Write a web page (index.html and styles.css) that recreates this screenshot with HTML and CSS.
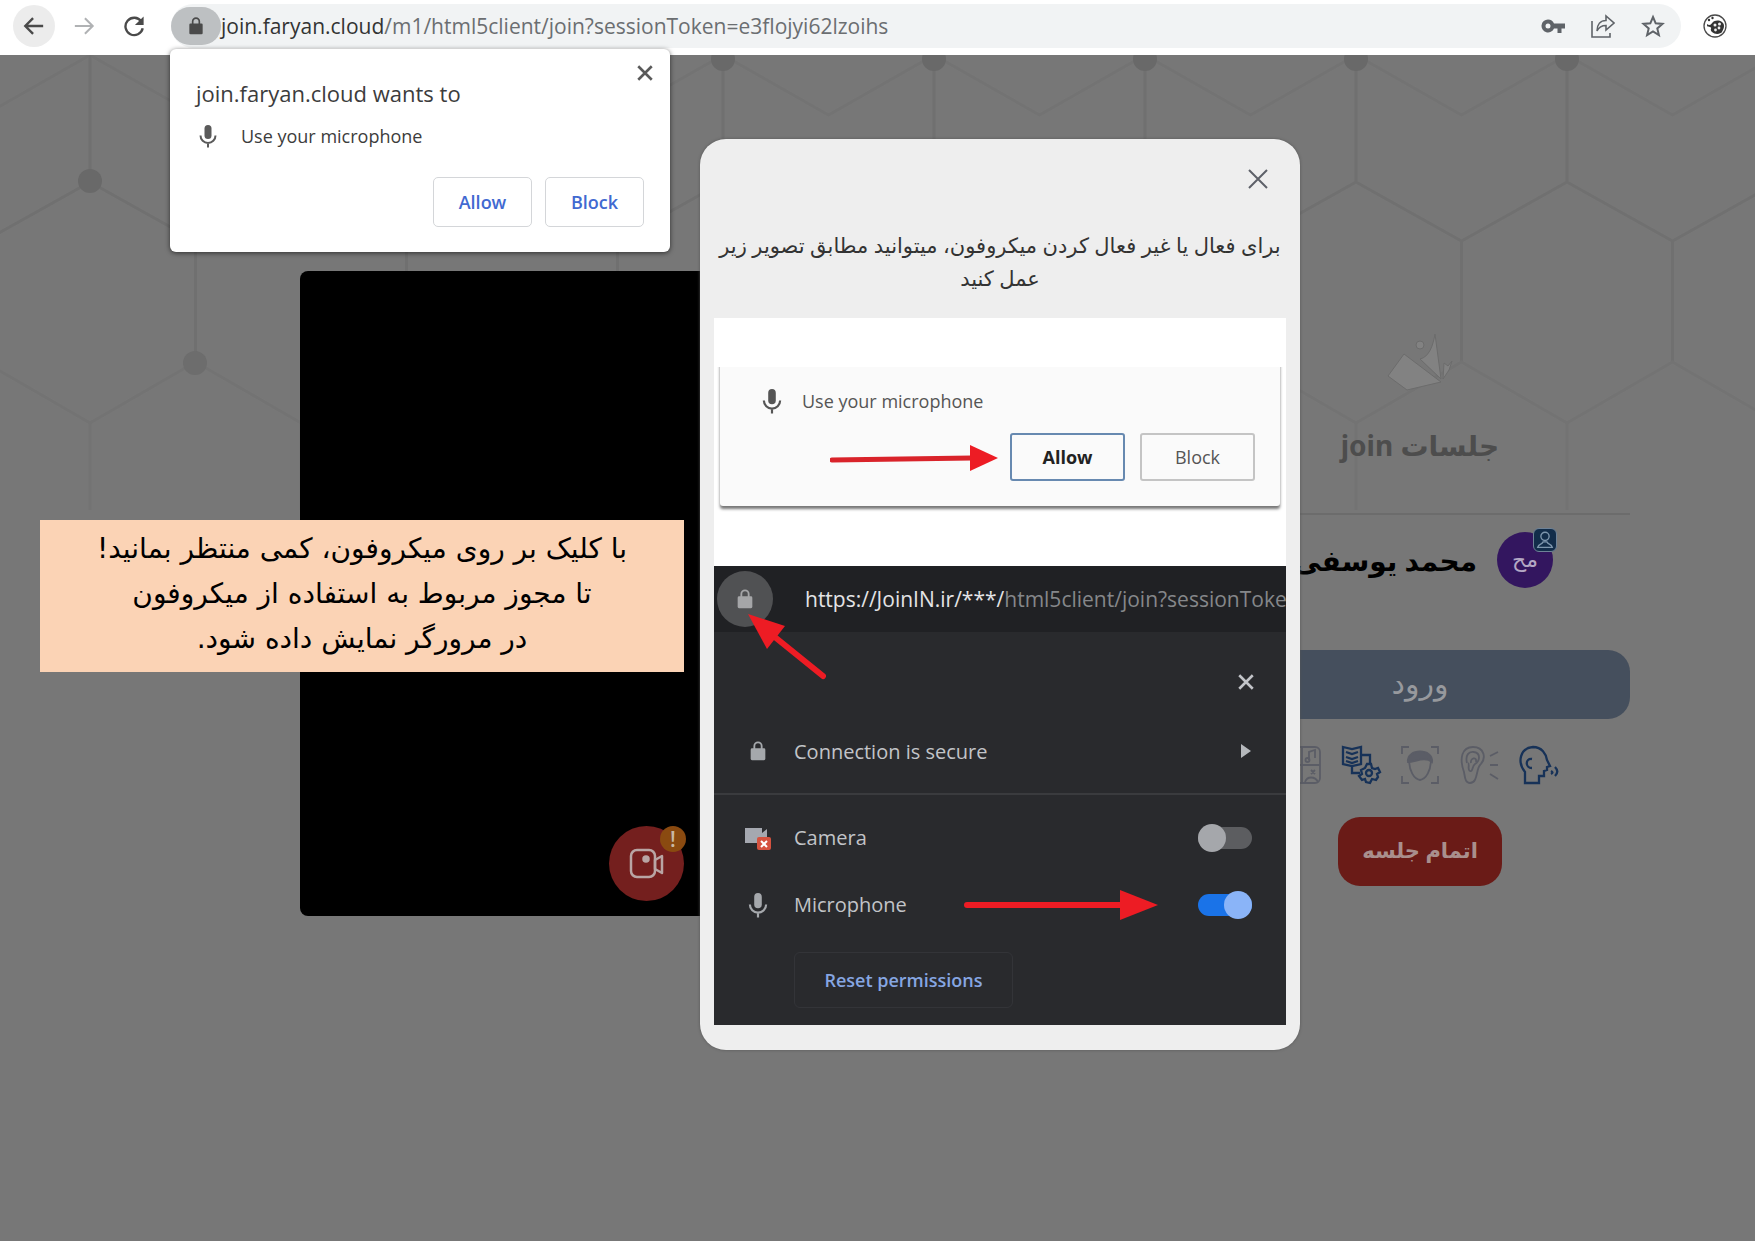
FILE: index.html
```
<!DOCTYPE html>
<html lang="fa">
<head>
    <meta charset="UTF-8">
    <meta name="viewport" content="width=device-width, initial-scale=1.0">
    <title>جلسات join</title>
    <link rel="stylesheet" href="styles.css">
</head>
<body>
    <!-- shared icons -->
    <svg class="sprite" aria-hidden="true">
        <symbol id="mic" viewBox="0 0 24 24">
            <rect x="8.5" y="1" width="7" height="14" rx="3.5" fill="currentColor"/>
            <path d="M4.5 11.5a7.5 7.5 0 0 0 15 0M12 19v4.5" fill="none" stroke="currentColor" stroke-width="2"/>
        </symbol>
        <symbol id="lock" viewBox="0 0 24 24">
            <rect x="4" y="9" width="16" height="13" rx="1.5" fill="currentColor"/>
            <path d="M8 10V6.500a4 4 0 0 1 8 0V10" fill="none" stroke="currentColor" stroke-width="2"/>
        </symbol>
        <symbol id="cross" viewBox="0 0 24 24">
            <path d="M3 3l18 18M21 3L3 21" fill="none" stroke="currentColor" stroke-width="3.500"/>
        </symbol>
    </svg>

    <header class="browser-bar">
        <button class="nav-btn nav-back" aria-label="Back">
            <svg viewBox="0 0 24 24"><path d="M22 12H3M11 3.500L2.500 12l8.500 8.500" fill="none" stroke="#4a4a4a" stroke-width="2.600"/></svg>
        </button>
        <button class="nav-btn" aria-label="Forward">
            <svg viewBox="0 0 24 24"><path d="M2 12h19M13 3.500l8.500 8.500-8.500 8.500" fill="none" stroke="#b0b2b4" stroke-width="2.200"/></svg>
        </button>
        <button class="nav-btn" aria-label="Reload">
            <svg viewBox="0 0 24 24"><path d="M20 7a9.500 9.500 0 1 0 1.500 7.500" fill="none" stroke="#4a4a4a" stroke-width="2.600"/><path d="M22.500 1.500V11H13z" fill="#4a4a4a"/></svg>
        </button>
        <div class="address-bar">
            <button class="site-info" aria-label="View site information">
                <svg><use href="#lock"/></svg>
            </button>
            <span class="url">join.faryan.cloud<span class="url-path">/m1/html5client/join?sessionToken=e3flojyi62lzoihs</span></span>
            <div class="address-actions">
                <button class="icon-btn" aria-label="Passwords">
                    <svg viewBox="0 0 24 24"><path d="M7 5.500a6.500 6.500 0 1 0 6 9h3.500V19h4v-4.500H24v-5H13a6.500 6.500 0 0 0-6-4zM7 9.500a2.500 2.500 0 1 1 0 5 2.500 2.500 0 0 1 0-5z" fill="#5f6368" fill-rule="evenodd"/></svg>
                </button>
                <button class="icon-btn" aria-label="Share">
                    <svg viewBox="0 0 24 24"><path d="M1 7v16h18v-4M6 17c0-6.500 3.500-10.500 9-10.500V2l8 7-8 7v-4.500c-4.500 0-7 1.500-9 5.500z" fill="none" stroke="#5f6368" stroke-width="1.600"/></svg>
                </button>
                <button class="icon-btn" aria-label="Bookmark">
                    <svg viewBox="0 0 24 24"><path d="M12 3l2.700 6.300 6.800.6-5.200 4.500 1.600 6.700L12 17.500l-5.900 3.600 1.600-6.700-5.200-4.500 6.800-.6z" fill="none" stroke="#5f6368" stroke-width="2"/></svg>
                </button>
            </div>
        </div>
        <button class="icon-btn extension" aria-label="Extension">
            <svg viewBox="0 0 24 24">
                <circle cx="12" cy="12" r="11" fill="#fff" stroke="#4a4a4a" stroke-width="1.300"/>
                <path d="M4 10c3 3 5-1 6-2s5-3 9 0 1 8 0 10-7 3-10 0 1-4-2-5-3 0-3-3z" fill="#333"/>
                <g fill="#eee"><circle cx="12" cy="11" r="1.500"/><circle cx="16.500" cy="10" r="1.500"/><circle cx="16" cy="14" r="1.400"/><circle cx="12.500" cy="16" r="1.400"/></g>
                <g fill="#333"><circle cx="6" cy="6" r="1.200"/><circle cx="9.500" cy="4" r="1.200"/></g>
            </svg>
        </button>
    </header>

    <main class="page">
        <svg class="page-bg" aria-hidden="true">
            <defs>
                <pattern id="hex" x="90" width="211" height="480" patternUnits="userSpaceOnUse">
                    <path d="M0 0L105.500 60L211 0" stroke="#737373"/>
                    <path d="M0 0V127M211 0V127L105.500 186L0 127M105.500 186V307" stroke="#707070"/>
                    <path d="M0 368L105.500 307L211 368M0 368V455M211 368V455" stroke="#737373"/>
                </pattern>
            </defs>
            <rect width="100%" height="480" fill="url(#hex)"/>
            <g fill="#696969">
                <circle cx="90" cy="126" r="12"/><circle cx="195" cy="308" r="12" fill="#6d6d6d"/>
                <circle cx="723" cy="4" r="12"/><circle cx="934" cy="4" r="12"/><circle cx="1145" cy="4" r="12"/>
                <circle cx="1356" cy="4" r="12"/><circle cx="1567" cy="4" r="12"/>
            </g>
        </svg>

        <section class="video-preview">
            <button class="camera-btn" aria-label="Camera">
                <svg viewBox="0 0 36 36" fill="none" stroke="#b9a5a4" stroke-width="2.500">
                    <rect x="2" y="4" width="24" height="27" rx="6"/>
                    <path d="M26 14l7-4v17l-7-4z" stroke-linejoin="round"/>
                    <circle cx="17" cy="13" r="2.500" fill="#b9a5a4"/>
                </svg>
                <span class="camera-alert">!</span>
            </button>
        </section>

        <aside class="session" dir="rtl">
            <svg class="session-logo" viewBox="0 0 66 58" fill="#828282" stroke="#6c6c6c">
                <path d="M17 21L54 49L20 57L1 43z"/>
                <path d="M33 26c9-2 13-13 15-25l6 45z"/>
                <circle cx="33" cy="12" r="4"/>
                <path d="M56 46l1-16 4 3 4-5-3 9z"/>
            </svg>
            <h1 class="session-title">جلسات join</h1>
            <div class="user">
                <div class="avatar">مح
                    <span class="avatar-badge">
                        <svg viewBox="0 0 24 24" fill="none" stroke="#7d96ad" stroke-width="1.500"><circle cx="12" cy="8" r="4.500"/><path d="M4 20c1-4 5-3 6-6h4c1 3 5 2 6 6z"/></svg>
                    </span>
                </div>
                <span class="user-name">محمد یوسفی</span>
            </div>
            <button class="enter-btn">ورود</button>
            <div class="abilities">
                <svg viewBox="0 0 38 38" stroke="#173258" stroke-width="2.300">
                    <path d="M6 37V26C-2 16 1 2 14 1c9 0 13 7 14 13l3 6-3 1v3l-3 1v5h-5v7zM13 13c-7-1-7 9 0 9M32 25c2 1 2 2 0 3M36 21c3 3 3 6 0 9"/>
                </svg>
                <svg viewBox="0 0 38 38" stroke="#5b5d66" stroke-width="1.800">
                    <path d="M4 26C-1 12 2 1 13 1c11 0 14 11 7 18-4 4-2 18-10 18-5 0-5-6-6-11zM7 17C5 9 9 5 14 6c7 1 6 9 1 12-3 2-2 8-5 7s0-7-2-8M11 17c-1-5 6-7 5-1M30 10l8-4M30 19h8M30 28l8 5"/>
                </svg>
                <svg viewBox="0 0 38 38" stroke="#5b5d66" stroke-width="1.800">
                    <path d="M1 8V1h7M30 1h7v7M37 30v7h-7M8 37H1v-7M8 13c0 12 5 20 11 21 6-1 11-9 11-21"/>
                    <path d="M7 16c-2-14 26-14 24 0-7-6-17 0-24 0z" fill="#5b5d66"/>
                </svg>
                <svg viewBox="0 0 38 38" stroke="#173258" stroke-width="2.300">
                    <path d="M1 1l9 2 9-2v17l-9 2-9-2zM4 6l6 2 6-2M4 11l6 2 6-2M4 15l6 2 6-2M20 9h8v8M10 20v7h8"/>
                    <path d="M25 18h4l1 4 3 1 3-1 2 4-3 2 1 3-2 3-4-1-2 4-4-1-1-3-3 1-3-4 3-2-1-4 4-2z"/>
                    <circle cx="27" cy="27" r="3"/>
                </svg>
                <svg viewBox="0 0 38 38" stroke="#5b5d66" stroke-width="1.800">
                    <rect x="1" y="1" width="36" height="36" rx="5"/>
                    <path d="M19 1v36M1 19h36M26 14V6l6-2v8M22 36c2-6 10-6 13 0M28 24l4 4M32 24l-4 4"/>
                    <circle cx="24.500" cy="14" r="2"/><circle cx="10" cy="10" r="4"/>
                </svg>
            </div>
            <button class="end-btn">اتمام جلسه</button>
        </aside>
    </main>

    <div class="permission-popup" role="dialog" aria-labelledby="permissionTitle">
        <button class="popup-close" aria-label="Close"><svg><use href="#cross"/></svg></button>
        <h2 id="permissionTitle">join.faryan.cloud wants to</h2>
        <p class="permission-item"><svg><use href="#mic"/></svg>Use your microphone</p>
        <div class="popup-actions">
            <button class="popup-btn">Allow</button>
            <button class="popup-btn">Block</button>
        </div>
    </div>

    <div class="hint-note" dir="rtl">
        با کلیک بر روی میکروفون، کمی منتظر بمانید!<br>
        تا مجوز مربوط به استفاده از میکروفون<br>
        در مرورگر نمایش داده شود.
    </div>

    <div class="modal" role="dialog" aria-labelledby="modalText">
        <button class="modal-close" aria-label="بستن">
            <svg viewBox="0 0 24 24"><path d="M3 3l18 18M21 3L3 21" fill="none" stroke="#5d6068" stroke-width="2"/></svg>
        </button>
        <p id="modalText" class="modal-text" dir="rtl">برای فعال یا غیر فعال کردن میکروفون، میتوانید مطابق تصویر زیر عمل کنید</p>

        <div class="guide">
            <div class="guide-light">
                <div class="guide-card">
                    <p class="guide-mic"><svg><use href="#mic"/></svg>Use your microphone</p>
                    <div class="guide-actions">
                        <svg class="arrow-allow" viewBox="0 0 168 28"><path d="M2 17L142 15" stroke="#d9232a" stroke-width="5" stroke-linecap="round"/><path d="M140 2l28 13-28 13z" fill="#ed1c24"/></svg>
                        <button class="guide-btn guide-btn-allow">Allow</button>
                        <button class="guide-btn">Block</button>
                    </div>
                </div>
            </div>
            <div class="guide-dark">
                <div class="guide-url">
                    <span class="guide-lock"><svg><use href="#lock"/></svg></span>
                    <span class="guide-url-text">https://JoinIN.ir/***/<span class="guide-url-path">html5client/join?sessionToken</span></span>
                </div>
                <svg class="arrow-lock" viewBox="0 0 78 66"><path d="M28 24L75 62" stroke="#ed1c24" stroke-width="6" stroke-linecap="round"/><path d="M0 0L37 12L19 35z" fill="#ed1c24"/></svg>
                <div class="guide-panel">
                    <button class="guide-close" aria-label="Close"><svg><use href="#cross"/></svg></button>
                    <div class="guide-row guide-secure">
                        <svg class="row-lock"><use href="#lock"/></svg>
                        <span>Connection is secure</span>
                        <svg class="chevron" viewBox="0 0 12 14"><path d="M1 0l10 7-10 7z" fill="#b5b8bc"/></svg>
                    </div>
                    <div class="guide-row">
                        <svg viewBox="0 0 26 24"><path d="M0 2h17v5l5-4v14H0z" fill="#a5a8b0"/><rect x="12" y="11" width="14" height="13" rx="2" fill="#d5523f"/><path d="M16 15l6 6M22 15l-6 6" stroke="#fff" stroke-width="2"/></svg>
                        <label for="camera">Camera</label>
                        <input class="toggle" type="checkbox" id="camera">
                    </div>
                    <div class="guide-row">
                        <svg><use href="#mic"/></svg>
                        <label for="microphone">Microphone</label>
                        <svg class="arrow-mic" viewBox="0 0 194 30"><path d="M3 15h156" stroke="#ed1c24" stroke-width="6" stroke-linecap="round"/><path d="M156 0l38 15-38 15z" fill="#ed1c24"/></svg>
                        <input class="toggle" type="checkbox" id="microphone" checked>
                    </div>
                    <button class="reset-btn">Reset permissions</button>
                </div>
            </div>
        </div>
    </div>
</body>
</html>
```
FILE: styles.css
```
/* base */
* {
    box-sizing: border-box;
}

body {
    margin: 0;
    min-height: 100vh;
    display: flex;
    flex-direction: column;
    position: relative;
    overflow: hidden;
    font-family: "Open Sans", "Noto Sans", "DejaVu Sans", sans-serif;
    background: #777;
}

button {
    display: flex;
    align-items: center;
    justify-content: center;
    padding: 0;
    border: none;
    background: none;
    font-family: inherit;
    cursor: pointer;
}

h1, h2, p {
    margin: 0;
}

.sprite {
    display: none;
}

/* browser toolbar */
.browser-bar {
    display: flex;
    align-items: center;
    gap: 8px;
    height: 55px;
    padding: 0 28px 4px 13px;
    background: #fff;
    direction: ltr;
}

.nav-btn {
    width: 42px;
    height: 42px;
    border-radius: 50%;
}

.nav-btn svg {
    width: 22px;
    height: 22px;
}

.nav-back {
    background: #ececec;
}

.address-bar {
    flex: 1;
    display: flex;
    align-items: center;
    height: 44px;
    margin: 0 14px 0 8px;
    border-radius: 22px;
    background: #f1f3f4;
}

.site-info {
    width: 50px;
    height: 38px;
    border-radius: 20px;
    background: #bdc0c2;
    color: #4a4a4a;
}

.site-info svg {
    width: 20px;
    height: 20px;
}

.url {
    font-size: 21px;
    color: #333;
}

.url-path {
    color: #6b6e71;
}

.address-actions {
    display: flex;
    gap: 26px;
    margin-left: auto;
    padding-right: 16px;
}

.icon-btn {
    width: 24px;
    height: 24px;
}

.icon-btn svg {
    width: 24px;
    height: 24px;
}

/* meeting page behind the dialogs */
.page {
    flex: 1;
    position: relative;
    display: grid;
    grid-template-columns: 1fr 420px;
    gap: 110px;
    align-items: start;
    padding: 216px 125px 0 300px;
}

.page-bg {
    position: absolute;
    top: 0;
    left: 0;
    width: 100%;
    height: 100%;
}

.page-bg path {
    fill: none;
    stroke-width: 3;
}

.video-preview {
    position: relative;
    display: flex;
    align-items: flex-end;
    height: 645px;
    padding: 0 0 15px 309px;
    border-radius: 8px;
    background: #000;
}

.camera-btn {
    position: relative;
    width: 75px;
    height: 75px;
    border-radius: 50%;
    background: #741f1e;
}

.camera-btn svg {
    width: 36px;
    height: 36px;
}

.camera-alert {
    position: absolute;
    top: 0;
    right: -2px;
    width: 26px;
    height: 26px;
    border-radius: 50%;
    background: #8a4a10;
    color: #c9b9a5;
    font-size: 21px;
    font-weight: 600;
    line-height: 26px;
}

.session {
    position: relative;
    display: flex;
    flex-direction: column;
    align-items: center;
    padding-top: 62px;
    font-family: "Noto Sans", "DejaVu Sans", sans-serif;
}

.session-logo {
    width: 66px;
    height: 58px;
}

.session-title {
    width: 100%;
    padding: 30px 0 44px;
    border-bottom: 2px solid #6c6c6c;
    font-size: 28px;
    line-height: 48px;
    text-align: center;
    color: #4d4d4d;
}

.user {
    align-self: stretch;
    display: flex;
    align-items: center;
    gap: 20px;
    padding: 17px 77px 62px 0;
}

.avatar {
    position: relative;
    flex-shrink: 0;
    width: 56px;
    height: 56px;
    border-radius: 50%;
    background: #33165f;
    color: #b3a8c4;
    font-size: 22px;
    line-height: 52px;
    text-align: center;
}

.avatar-badge {
    position: absolute;
    top: -4px;
    right: -4px;
    display: flex;
    width: 24px;
    height: 24px;
    border: 1px solid #6e8297;
    border-radius: 6px;
    background: #122d4a;
}

.user-name {
    font-size: 28px;
    font-weight: bold;
    line-height: 56px;
    white-space: nowrap;
    color: #000;
}

.enter-btn {
    width: 100%;
    height: 69px;
    padding-bottom: 4px;
    border-radius: 22px;
    background: #454f5d;
    color: #97999d;
    font-size: 30px;
}

.abilities {
    display: flex;
    gap: 21px;
    padding: 27px 0 33px;
}

.abilities svg {
    width: 38px;
    height: 38px;
    fill: none;
    overflow: visible;
}

.end-btn {
    height: 69px;
    padding: 0 24px 4px;
    border-radius: 22px;
    background: #6a1b17;
    color: #a98f8d;
    font-size: 21px;
    font-weight: bold;
}

/* browser permission prompt */
.permission-popup {
    position: absolute;
    top: 49px;
    left: 170px;
    width: 500px;
    padding: 28px 26px 25px;
    border-radius: 6px;
    background: #fff;
    box-shadow: 0 1px 5px rgba(0, 0, 0, 0.6);
}

.popup-close {
    position: absolute;
    top: 14px;
    right: 15px;
    width: 20px;
    height: 20px;
    color: #5a5a5a;
}

.popup-close svg {
    width: 18px;
    height: 18px;
}

.permission-popup h2 {
    font-size: 22px;
    font-weight: normal;
    line-height: 32px;
    color: #3c3c3c;
}

.permission-item {
    display: flex;
    align-items: center;
    gap: 21px;
    padding: 14px 0 28px;
    font-size: 18px;
    line-height: 26px;
    color: #3c3c3c;
}

.permission-item svg {
    width: 24px;
    height: 24px;
    color: #5a5a5a;
}

.popup-actions {
    display: flex;
    justify-content: flex-end;
    gap: 13px;
}

.popup-btn {
    width: 99px;
    height: 50px;
    border: 1px solid #d4d6d9;
    border-radius: 5px;
    color: #4169d1;
    font-size: 18px;
    font-weight: 600;
}

/* annotation */
.hint-note {
    position: absolute;
    top: 520px;
    left: 40px;
    width: 644px;
    padding: 6px 0 11px;
    background: #fbd3b5;
    color: #000;
    font-family: "DejaVu Sans", serif;
    font-size: 28px;
    line-height: 45px;
    text-align: center;
}

/* help dialog */
.modal {
    position: absolute;
    top: 139px;
    left: 700px;
    width: 600px;
    padding: 26px 14px 25px;
    border-radius: 26px;
    background: #eee;
    box-shadow: 0 0 3px #555;
}

.modal-close {
    width: 28px;
    height: 28px;
    margin: 0 14px 0 auto;
}

.modal-close svg {
    width: 24px;
    height: 24px;
}

.modal-text {
    margin: 0 -8px;
    padding: 36px 0 23px;
    font-family: "Noto Sans", "DejaVu Sans", sans-serif;
    font-size: 21px;
    line-height: 33px;
    text-align: center;
    color: #333;
}

.guide-light {
    padding: 21px 6px 60px;
    background: #fff;
}

.guide-card {
    padding: 48px 25px 25px 39px;
    background: #fafafa;
    border-radius: 3px;
    box-shadow: 0 3px 3px #777;
    clip-path: inset(28px -6px -8px -6px);
}

.guide-mic {
    display: flex;
    align-items: center;
    gap: 17px;
    padding-bottom: 18px;
    font-size: 18px;
    line-height: 28px;
    color: #555;
}

.guide-mic svg {
    width: 26px;
    height: 26px;
}

.guide-actions {
    display: flex;
    align-items: center;
    justify-content: flex-end;
    gap: 15px;
}

.arrow-allow {
    width: 168px;
    height: 28px;
    margin-right: -3px;
}

.guide-btn {
    width: 115px;
    height: 48px;
    border: 2px solid #c4c4c4;
    border-radius: 3px;
    color: #555;
    font-size: 18px;
}

.guide-btn-allow {
    border-color: #6789b0;
    color: #222;
    font-weight: bold;
}

.guide-dark {
    position: relative;
    background: #292a2d;
    color: #c2c4c8;
}

.guide-url {
    display: flex;
    align-items: center;
    gap: 32px;
    height: 66px;
    padding-left: 3px;
    overflow: hidden;
    background: #202124;
    white-space: nowrap;
}

.guide-lock {
    flex-shrink: 0;
    display: flex;
    align-items: center;
    justify-content: center;
    width: 56px;
    height: 56px;
    border-radius: 50%;
    background: #505153;
    color: #a5a6a8;
}

.guide-lock svg {
    width: 22px;
    height: 22px;
}

.guide-url-text {
    font-size: 21px;
    color: #e4e4e6;
}

.guide-url-path {
    color: #85878a;
}

.arrow-lock {
    position: absolute;
    top: 48px;
    left: 34px;
    width: 78px;
    height: 66px;
}

.guide-panel {
    padding: 35px 0 17px;
}

.guide-close {
    width: 30px;
    height: 30px;
    margin: 0 25px 0 auto;
    color: #c2c4c8;
}

.guide-close svg {
    width: 18px;
    height: 18px;
}

.guide-row {
    display: flex;
    align-items: center;
    gap: 23px;
    height: 67px;
    padding: 0 34px 0 31px;
    font-size: 20px;
}

.guide-row > svg:first-child {
    width: 26px;
    height: 26px;
    color: #a5a8ac;
}

.guide-row > .row-lock:first-child {
    height: 22px;
}

.guide-row > :last-child {
    margin-left: auto;
}

.guide-secure {
    height: 98px;
    padding-top: 12px;
    margin-bottom: 9px;
    border-bottom: 2px solid #3a3b3e;
}

.chevron {
    width: 12px;
    height: 14px;
}

.arrow-mic {
    width: 194px;
    height: 30px;
    margin-left: 34px;
}

.toggle {
    appearance: none;
    position: relative;
    width: 54px;
    height: 22px;
    margin: 0;
    border-radius: 11px;
    background: #5c5d60;
}

.toggle::before {
    content: "";
    position: absolute;
    top: -3px;
    left: 0;
    width: 28px;
    height: 28px;
    border-radius: 50%;
    background: #a5a7ab;
}

.toggle:checked {
    background: #1a73e8;
}

.toggle:checked::before {
    left: 26px;
    background: #8ab4f8;
}

.reset-btn {
    width: 219px;
    height: 56px;
    margin: 14px 0 0 80px;
    border: 1px solid #333438;
    border-radius: 6px;
    color: #86a6e2;
    font-size: 18px;
    font-weight: 600;
}
```
